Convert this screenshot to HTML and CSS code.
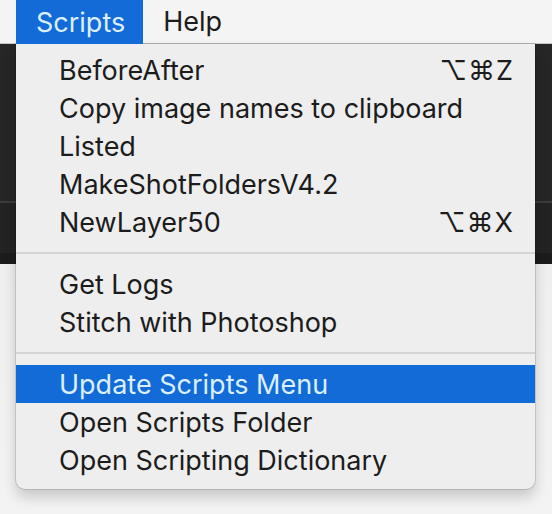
FILE: index.html
```html
<!DOCTYPE html>
<html lang="en">
<head>
<meta charset="utf-8">
<title>Scripts menu</title>
<link rel="stylesheet" href="styles.css">
</head>
<body>
<div class="menubar">
  <div class="bar-item active">Scripts</div>
  <div class="bar-item">Help</div>
</div>
<div class="stage">
  <div class="menu">
    <div class="group">
      <div class="item"><span>BeforeAfter</span><span class="key">⌥⌘Z</span></div>
      <div class="item"><span>Copy image names to clipboard</span></div>
      <div class="item"><span>Listed</span></div>
      <div class="item"><span>MakeShotFoldersV4.2</span></div>
      <div class="item"><span>NewLayer50</span><span class="key">⌥⌘X</span></div>
    </div>
    <div class="sep"></div>
    <div class="group">
      <div class="item"><span>Get Logs</span></div>
      <div class="item"><span>Stitch with Photoshop</span></div>
    </div>
    <div class="sep"></div>
    <div class="group">
      <div class="item selected"><span>Update Scripts Menu</span></div>
      <div class="item"><span>Open Scripts Folder</span></div>
      <div class="item"><span>Open Scripting Dictionary</span></div>
    </div>
  </div>
</div>
</body>
</html>
```

FILE: styles.css
```css
html, body {
  margin: 0;
  padding: 0;
}
body {
  width: 552px;
  height: 514px;
  overflow: hidden;
  font-family: "Inter", "Liberation Sans", sans-serif;
  color: #1c1c1c;
  background:
    linear-gradient(to bottom,
      #262626 0, #262626 201px,
      #3b3b3b 201px, #3b3b3b 203px,
      #232323 203px, #232323 253px,
      #1c1c1c 253px, #1c1c1c 264px,
      #efefef 264px, #f3f3f3 100%);
}
.menubar {
  display: flex;
  height: 44px;
  background: #f4f4f4;
  padding-left: 16px;
  font-size: 27px;
  border-bottom: 1px solid #c6c6c6;
  box-sizing: border-box;
}
.bar-item {
  display: flex;
  align-items: center;
  padding: 0 19px 0 20px;
  color: #1c1c1c;
}
.bar-item.active {
  background: #136bd8;
  color: #dcefff;
  padding: 0 18px 0 20px;
  margin-bottom: -1px;
}
.stage {
  padding-left: 16px;
  padding-right: 17px;
}
.menu {
  background: #eeeeee;
  border-radius: 0 0 9px 9px;
  box-shadow: 0 0 0 1px rgba(0,0,0,0.12), 0 8px 14px rgba(0,0,0,0.18);
  padding: 7px 0 10px;
  font-size: 27px;
}
.item {
  display: flex;
  justify-content: space-between;
  align-items: center;
  height: 38px;
  padding: 0 21px 0 43px;
  white-space: nowrap;
}
.item.selected {
  background: #136bd8;
  color: #dcefff;
}
.key {
  letter-spacing: 1px;
}
.sep {
  height: 2px;
  background: #d4d4d4;
  margin: 11px 0 11px;
}
```
